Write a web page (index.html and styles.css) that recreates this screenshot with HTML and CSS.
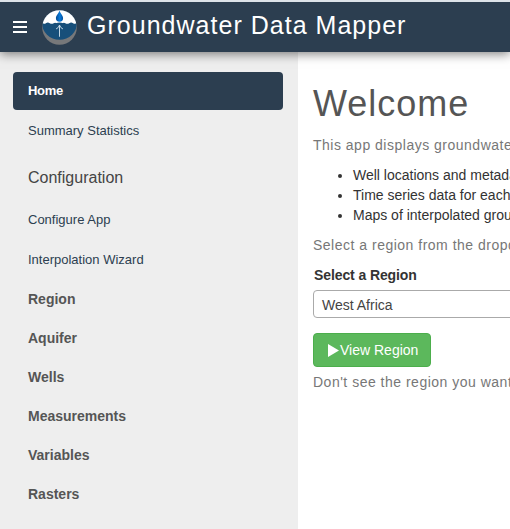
FILE: index.html
```html
<!DOCTYPE html>
<html lang="en">
<head>
<meta charset="utf-8">
<title>Groundwater Data Mapper</title>
<link rel="stylesheet" href="styles.css">
</head>
<body>
<header class="app-header">
  <span class="menu-toggle"><i></i><i></i><i></i></span>
  <svg class="logo" viewBox="0 0 36 36" width="35" height="35">
    <defs>
      <clipPath id="disc"><circle cx="18" cy="18" r="17.8"/></clipPath>
      <linearGradient id="drop" x1="0" x2="1"><stop offset="0" stop-color="#064b91"/><stop offset=".55" stop-color="#087bdc"/><stop offset="1" stop-color="#06509b"/></linearGradient>
    </defs>
    <g clip-path="url(#disc)">
      <rect width="36" height="36" fill="#77787a"/>
      <circle cx="18" cy="12.5" r="18.2" fill="#174f7a"/>
      <path d="M0 0H36V13Q34 15 32 13.500Q30 12 28 13.500Q26 15 24 13.500Q22.500 12.500 21 13.500H15Q13.500 12.500 12 13.500Q10 15 8 13.500Q6 12 4 13.500Q2 15 0 13Z" fill="#fff"/>
      <path d="M14 14Q18 11.500 22 14V16H14Z" fill="#174f7a"/>
    </g>
    <path d="M18 0C18 3 14.300 5 14.300 8.500A3.700 3.500 0 0 0 21.700 8.500C21.700 5 18 3 18 0Z" fill="url(#drop)"/>
    <path d="M18 27.500V15.500M14.500 19.500Q17 18.500 18 15.500Q19 18.500 21.500 19.500" fill="none" stroke="#c9dce8" stroke-width="1"/>
  </svg>
  <span class="app-title">Groundwater Data Mapper</span>
</header>
<div class="app-body">
  <nav class="sidebar">
    <a class="nav-link active">Home</a>
    <a class="nav-link">Summary Statistics</a>
    <div class="nav-title">Configuration</div>
    <a class="nav-link">Configure App</a>
    <a class="nav-link">Interpolation Wizard</a>
    <div class="nav-group first">Region</div>
    <div class="nav-group">Aquifer</div>
    <div class="nav-group">Wells</div>
    <div class="nav-group">Measurements</div>
    <div class="nav-group">Variables</div>
    <div class="nav-group">Rasters</div>
  </nav>
  <main class="content">
    <h1>Welcome</h1>
    <p>This app displays groundwater data</p>
    <ul>
      <li>Well locations and metadata</li>
      <li>Time series data for each well</li>
      <li>Maps of interpolated groundwater</li>
    </ul>
    <p>Select a region from the dropdown</p>
    <label>Select a Region</label>
    <div class="select">West Africa</div>
    <a class="button"><svg width="12" height="13" viewBox="0 0 12 13"><path d="M0 0L11 6.500L0 13Z" fill="#fff"/></svg>View Region</a>
    <p>Don't see the region you want?</p>
  </main>
</div>
</body>
</html>
```
FILE: styles.css
```css
* { box-sizing: border-box; }
body {
  margin: 0;
  height: 529px;
  overflow: hidden;
  display: flex;
  flex-direction: column;
  font: 14px/20px "Liberation Sans", Arial, sans-serif;
  color: #333;
  background: #fff;
}
.app-header {
  position: relative;
  flex: none;
  height: 52px;
  border-top: 2px solid #dde3e9;
  background: #2c3e50;
  box-shadow: 0 2px 10px rgba(0, 0, 0, .5);
  display: flex;
  align-items: center;
  padding-left: 13px;
  white-space: nowrap;
}
.menu-toggle { display: grid; gap: 3px; width: 14px; margin-right: 15px; }
.menu-toggle i { height: 2px; background: #fff; }
.logo { flex: none; margin: 1px 10px 0 0; }
.app-title { color: #fff; font-size: 25px; letter-spacing: 1.02px; line-height: 30px; margin-top: -5px; }
.app-body { flex: 1; display: flex; min-height: 0; }
.sidebar { flex: none; width: 298px; background: #eee; padding: 20px 15px 0 13px; }
.nav-link {
  display: block;
  height: 38px;
  margin-bottom: 2px;
  padding: 9px 15px;
  border-radius: 4px;
  font-size: 13px;
  color: #2c3e50;
}
.nav-link.active { background: #2c3e50; color: #fff; font-weight: bold; letter-spacing: -.3px; }
.nav-title { height: 49px; padding: 16px 15px 0; font-size: 16px; color: #444; }
.nav-group { height: 39px; padding: 10px 15px 0; font-weight: bold; color: #555; }
.nav-group.first { height: 37px; padding-top: 8px; }
.content { flex: 1; min-width: 0; padding: 32px 0 0 15px; white-space: nowrap; overflow: hidden; }
h1 { margin: 0 0 11px; font-size: 36px; line-height: 40px; font-weight: normal; letter-spacing: 1px; color: #555; }
p { margin: 0; letter-spacing: .5px; color: #777; }
ul { margin: 10px 0; padding-left: 40px; }
label { display: block; margin: 10px 0 5px 1px; font-weight: bold; letter-spacing: -.1px; }
.select { width: 400px; height: 28px; border: 1px solid #aaa; border-radius: 4px; padding: 4px 8px; color: #444; }
.button {
  display: flex;
  align-items: center;
  width: 118px;
  height: 34px;
  margin: 15px 0 5px;
  padding-left: 14px;
  border: 1px solid #4cae4c;
  border-radius: 4px;
  background: #5cb85c;
  color: #fff;
}
```
